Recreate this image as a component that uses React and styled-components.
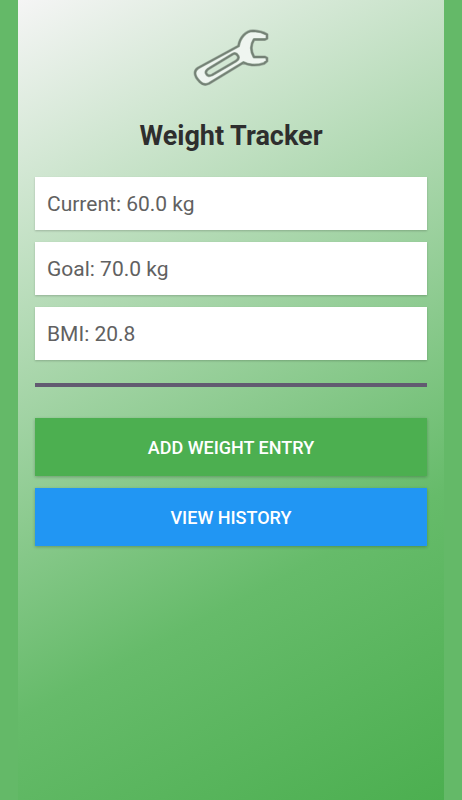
import styled, { createGlobalStyle } from 'styled-components'

const GlobalStyle = createGlobalStyle`
  * {
    box-sizing: border-box;
  }
  body {
    margin: 0;
    background-color: #64b968;
    font-family: Roboto, 'Liberation Sans', sans-serif;
  }
`

const Screen = styled.main`
  display: flex;
  flex-direction: column;
  min-height: 100vh;
  margin: 0 18px;
  padding: 20px 17px;
  background: linear-gradient(152deg, #f5f5f5 0%, #66bb6a 70%, #4caf50 100%);
`

const Logo = styled.svg`
  width: 78px;
  height: 78px;
  align-self: center;
`

const Title = styled.h1`
  margin: 22px 0 24px;
  color: #2e2e2e;
  font-size: 27px;
  font-weight: 700;
  line-height: 33px;
  text-align: center;
`

const Stack = styled.div`
  display: flex;
  flex-direction: column;
  gap: 12px;
`

const Stat = styled.p`
  margin: 0;
  padding: 15px 12px 13px;
  background-color: #fff;
  box-shadow: 0 1px 2px rgba(0, 0, 0, 0.2);
  color: #616161;
  font-size: 21px;
  line-height: 25px;
`

const Divider = styled.hr`
  width: 100%;
  height: 4px;
  margin: 23px 0 31px;
  border: 0;
  background-color: #625b71;
`

const Button = styled.button`
  height: 58px;
  padding: 0 16px;
  border: 0;
  background-color: ${(props) => props.$color};
  box-shadow: 0 1px 3px rgba(0, 0, 0, 0.24);
  color: #fff;
  font-family: inherit;
  font-size: 18px;
  font-weight: 500;
  text-transform: uppercase;
  cursor: pointer;
`

const stats = [
  { label: 'Current', value: '60.0 kg' },
  { label: 'Goal', value: '70.0 kg' },
  { label: 'BMI', value: '20.8' },
]

const wrenchPath =
  'M46.5 26 C48 17 54 11 61 10.8 Q69 11 75 14.5 V18.5 L73 19.5 H62 C58.5 25 58.5 31 62 37 H73 L75 38 V41 L72 43.5 Q66 45.5 60 45 Q55 44.5 51.5 42.5 L17 63.5 Q12 66 8 62 Q3 57 3 53 Q3 50 6 48 Z M14 53 Q13.5 50.5 17 48.5 L41 34 Q44 32.5 46 36 Q47.5 39 44 41 L20 55 Q15.5 57 14 53 Z'

const Wrench = () => (
  <Logo viewBox="0 0 78 78" aria-hidden="true">
    <path
      d={wrenchPath}
      fill="#eff5f0"
      fillRule="evenodd"
      stroke="#a3b3a5"
      strokeWidth="3"
      strokeLinejoin="round"
    />
    <path
      d={wrenchPath}
      fill="none"
      stroke="#748175"
      strokeWidth="1.8"
      strokeLinejoin="round"
    />
  </Logo>
)

const App = () => {
  return (
    <>
      <GlobalStyle />
      <Screen>
        <Wrench />
        <Title>Weight Tracker</Title>
        <Stack>
          {stats.map((stat) => (
            <Stat key={stat.label}>
              {stat.label}: {stat.value}
            </Stat>
          ))}
        </Stack>
        <Divider />
        <Stack>
          <Button $color="#4caf50">Add Weight Entry</Button>
          <Button $color="#2196f3">View History</Button>
        </Stack>
      </Screen>
    </>
  )
}

export default App
